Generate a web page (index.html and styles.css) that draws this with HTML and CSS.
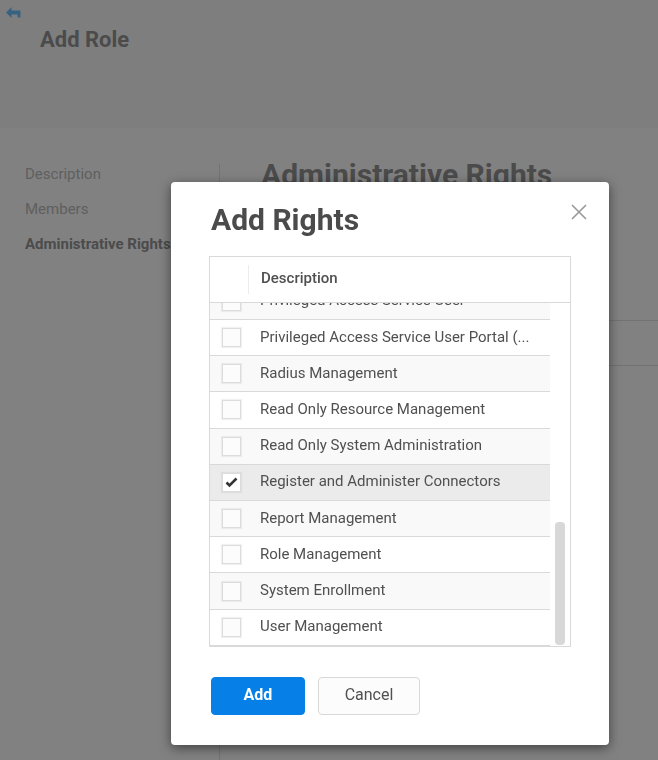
FILE: index.html
```html
<!DOCTYPE html>
<html lang="en">
<head>
<meta charset="utf-8">
<title>Add Role</title>
<link rel="stylesheet" href="styles.css">
</head>
<body>
<div class="page">
  <header class="page-header">
    <a class="back" href="#" aria-label="Back">
      <svg width="16" height="12" viewBox="0 0 16 12"><path d="M0 5.5 5.5 0v3.5H14.5v7H11.5V7.5H5.5v3.5z" fill="currentColor"/></svg>
    </a>
    <h1 class="page-title">Add Role</h1>
  </header>
  <div class="page-body">
    <nav class="side">
      <a class="side-link" href="#">Description</a>
      <a class="side-link" href="#">Members</a>
      <a class="side-link current" href="#">Administrative Rights</a>
    </nav>
    <main class="content">
      <h2 class="content-title">Administrative Rights</h2>
      <div class="content-grid"></div>
    </main>
  </div>
</div>
<div class="overlay">
  <section class="dialog" role="dialog" aria-labelledby="dialog-title">
    <div class="dialog-head">
      <h2 class="dialog-title" id="dialog-title">Add Rights</h2>
      <button class="close" type="button" aria-label="Close">
        <svg width="16" height="16" viewBox="0 0 16 16"><path d="M1 1 15 15M15 1 1 15" fill="none" stroke="currentColor" stroke-width="1.6"/></svg>
      </button>
    </div>
    <div class="grid">
      <div class="grid-head"><span class="grid-heading">Description</span></div>
      <div class="grid-view">
        <table class="rights">
          <tr><td class="pick"><input type="checkbox" id="r0"></td><td><label for="r0">Privileged Access Service User</label></td></tr>
          <tr><td class="pick"><input type="checkbox" id="r1"></td><td><label for="r1">Privileged Access Service User Portal (...</label></td></tr>
          <tr><td class="pick"><input type="checkbox" id="r2"></td><td><label for="r2">Radius Management</label></td></tr>
          <tr><td class="pick"><input type="checkbox" id="r3"></td><td><label for="r3">Read Only Resource Management</label></td></tr>
          <tr><td class="pick"><input type="checkbox" id="r4"></td><td><label for="r4">Read Only System Administration</label></td></tr>
          <tr class="selected"><td class="pick"><input type="checkbox" id="r5" checked></td><td><label for="r5">Register and Administer Connectors</label></td></tr>
          <tr><td class="pick"><input type="checkbox" id="r6"></td><td><label for="r6">Report Management</label></td></tr>
          <tr><td class="pick"><input type="checkbox" id="r7"></td><td><label for="r7">Role Management</label></td></tr>
          <tr><td class="pick"><input type="checkbox" id="r8"></td><td><label for="r8">System Enrollment</label></td></tr>
          <tr><td class="pick"><input type="checkbox" id="r9"></td><td><label for="r9">User Management</label></td></tr>
        </table>
        <div class="thumb"></div>
      </div>
    </div>
    <div class="actions">
      <button class="btn primary" type="button">Add</button>
      <button class="btn" type="button">Cancel</button>
    </div>
  </section>
</div>
</body>
</html>
```
FILE: styles.css
```css
* { box-sizing: border-box; }

body {
  margin: 0;
  background: #fff;
  color: #505050;
  font-family: Roboto, "Liberation Sans", sans-serif;
  font-size: 15px;
  line-height: 20px;
}

h1, h2 { margin: 0; color: #4b4b4b; font-weight: 700; }

.page {
  display: flex;
  flex-direction: column;
  min-height: 100vh;
}

.page-header {
  height: 128px;
  padding: 7px 6px;
  background: #f5f5f5;
}

.back { display: block; height: 12px; color: #0a96ff; }
.back svg { display: block; }

.page-title {
  padding: 7px 34px;
  font-size: 22px;
  line-height: 28px;
}

.page-body {
  display: flex;
  flex: 1;
  padding-top: 36px;
}

.side {
  display: flex;
  flex-direction: column;
  gap: 15px;
  width: 220px;
  padding-left: 25px;
  border-right: 1px solid #d0d0d0;
  white-space: nowrap;
}

.side-link { color: #8c8c8c; text-decoration: none; }
.side-link.current { color: #4b4b4b; font-weight: 700; }

.content { flex: 1; }

.content-title {
  height: 156px;
  padding-left: 41px;
  font-size: 30px;
  line-height: 22px;
}

.content-grid {
  height: 46px;
  margin-left: 41px;
  border: solid #d0d0d0;
  border-width: 1px 0;
}

.overlay {
  position: fixed;
  inset: 0;
  display: flex;
  align-items: flex-start;
  padding: 182px 49px 0 171px;
  background: rgba(76, 76, 76, .7);
}

.dialog {
  flex: 1;
  padding: 20px 38px 30px;
  border-radius: 4px;
  background: #fff;
  box-shadow: 0 3px 12px rgba(0, 0, 0, .5);
}

.dialog-head {
  display: flex;
  justify-content: space-between;
  align-items: flex-start;
  height: 54px;
  padding-left: 2px;
}

.dialog-title { font-size: 30px; line-height: 36px; }

.close {
  margin: 2px -16px 0 0;
  padding: 0;
  border: 0;
  background: none;
  color: #999;
}
.close svg { display: block; }

.grid { border: 1px solid #d9d9d9; }

.grid-head {
  height: 46px;
  padding: 8px 0 0 38px;
  border-bottom: 1px solid #d9d9d9;
}

.grid-heading {
  display: block;
  height: 29px;
  padding-left: 12px;
  border-left: 1px solid #ececec;
  font-weight: 500;
  line-height: 26px;
}

.grid-view {
  position: relative;
  display: flex;
  flex-direction: column;
  justify-content: flex-end;
  height: 343px;
  padding-right: 20px;
  overflow: hidden;
}

.rights {
  flex: none;
  width: 100%;
  height: 362px;
  border-collapse: collapse;
}

.rights tr { border-bottom: 1px solid #d9d9d9; }
.rights tr:nth-child(odd) { background: #f9f9f9; }
.rights tr.selected { background: #ebebeb; }
.rights td { padding: 0; vertical-align: middle; }
.rights .pick { width: 50px; padding-left: 12px; }
.rights label { display: block; padding-bottom: 2px; }

.rights input {
  display: block;
  appearance: none;
  width: 19px;
  height: 19px;
  margin: 0;
  border: 1px solid #dcdcdc;
  background: #fcfcfc center no-repeat;
  box-shadow: 0 0 1px 1px rgba(0, 0, 0, .05);
}

.rights input:checked {
  background-color: #fff;
  background-image: url("data:image/svg+xml,%3Csvg xmlns='http://www.w3.org/2000/svg' width='13' height='11' viewBox='0 0 13 11'%3E%3Cpath d='M1.5 5.5 4.5 8.5 11.5 1.5' fill='none' stroke='%23333' stroke-width='2.6'/%3E%3C/svg%3E");
}

.thumb {
  position: absolute;
  right: 5px;
  bottom: 1px;
  width: 10px;
  height: 123px;
  border-radius: 4px;
  background: #d8d8d8;
}

.actions {
  display: flex;
  gap: 13px;
  padding: 30px 2px 0;
}

.btn {
  width: 102px;
  height: 38px;
  padding: 0 0 2px;
  border: 1px solid #d9d9d9;
  border-radius: 4px;
  background: #fcfcfc;
  color: #505050;
  font: inherit;
  font-size: 16px;
}

.btn.primary {
  width: 94px;
  border-color: #0680e6;
  background: #0680e6;
  color: #fff;
  font-weight: 700;
}
```
